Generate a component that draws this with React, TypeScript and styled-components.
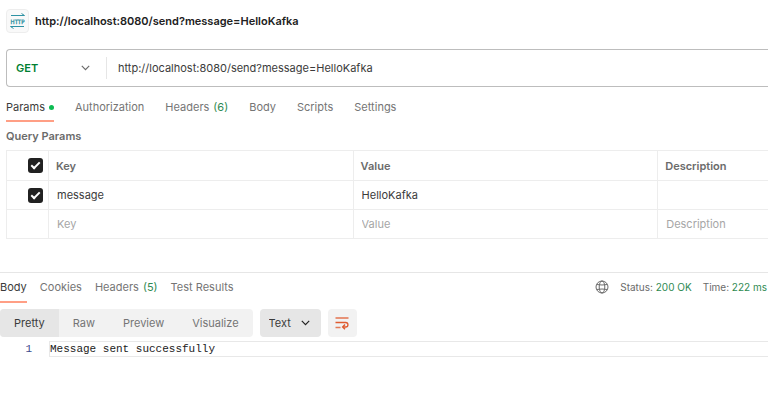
import React from "react";
import styled, { createGlobalStyle } from "styled-components";

const GlobalStyle = createGlobalStyle`
  *, *::before, *::after { box-sizing: border-box; }
  body {
    margin: 0;
    background: #fff;
    color: #6b6b6b;
    font: 12px/16px Inter, "Liberation Sans", sans-serif;
    overflow-x: hidden;
  }
  button, input, select { font: inherit; color: inherit; margin: 0; }
`;

const Page = styled.main`
  display: flex;
  flex-direction: column;
`;

const TitleBar = styled.header`
  display: flex;
  align-items: center;
  gap: 6px;
  height: 32px;
  margin: 5px 0 0 6px;
`;

const ProtocolBadge = styled.span`
  display: flex;
  width: 23px;
  height: 24px;
  align-items: center;
  justify-content: center;
  border: 1px solid #ededed;
  border-radius: 4px;
  background: #f9f9f9;
`;

const RequestTitle = styled.h1`
  margin: 0;
  font-size: 11px;
  line-height: 16px;
  font-weight: 600;
  color: #212121;
`;

const AddressBar = styled.form`
  display: flex;
  align-items: center;
  height: 38px;
  margin: 12px 0 0 6px;
  border: 1px solid #bdbdbd;
  border-right: 0;
  border-radius: 4px 0 0 4px;
`;

const SelectWrap = styled.label<{ $kind: "method" | "format" }>`
  display: grid;
  align-items: center;
  height: ${(p) => (p.$kind === "method" ? 22 : 28)}px;
  width: ${(p) => (p.$kind === "method" ? 100 : 61)}px;
  border-right: ${(p) => (p.$kind === "method" ? "1px solid #e6e6e6" : "0")};
  border-radius: ${(p) => (p.$kind === "method" ? 0 : 4)}px;
  background: ${(p) => (p.$kind === "method" ? "transparent" : "#e6e6e6")};
  color: ${(p) => (p.$kind === "method" ? "#6b6b6b" : "#212121")};
  > * { grid-area: 1 / 1; }
  > svg {
    justify-self: end;
    margin-right: ${(p) => (p.$kind === "method" ? 16 : 11)}px;
    pointer-events: none;
  }
`;

const Select = styled.select<{ $kind: "method" | "format" }>`
  appearance: none;
  width: 100%;
  height: 100%;
  border: 0;
  padding: 0 0 0 9px;
  background: transparent;
  font-size: 11px;
  font-weight: ${(p) => (p.$kind === "method" ? 600 : 400)};
  color: ${(p) => (p.$kind === "method" ? "#007f31" : "#3b3b3b")};
`;

const UrlInput = styled.input`
  flex: 1;
  min-width: 0;
  height: 100%;
  border: 0;
  padding: 0 11px;
  outline: 0;
  background: transparent;
  font-size: 11px;
  color: #3b3b3b;
`;

const TabRow = styled.nav<{ $gap: number; $inset: number }>`
  display: flex;
  gap: ${(p) => p.$gap}px;
  padding-left: ${(p) => p.$inset}px;
`;

const Tab = styled.button<{ $active?: boolean }>`
  display: flex;
  align-items: center;
  gap: 4px;
  height: 30px;
  border: 0;
  border-bottom: 2px solid ${(p) => (p.$active ? "#ff9f85" : "transparent")};
  padding: 0;
  background: none;
  font-size: 11px;
  white-space: nowrap;
  color: ${(p) => (p.$active ? "#3b3b3b" : "#757575")};
`;

const Count = styled.span`
  color: #2f8a52;
`;

const Dot = styled.i`
  width: 5px;
  height: 5px;
  border-radius: 50%;
  background: #0cbb52;
`;

const RequestTabs = styled.div`
  padding-top: 5px;
  ${Tab} { padding-top: 2px; }
`;

const SectionTitle = styled.h2`
  margin: 6px 0 5px 6px;
  font-size: 11px;
  line-height: 17px;
  font-weight: 600;
  color: #6b6b6b;
`;

const TableWrap = styled.div`
  padding-left: 6px;
`;

const ParamTable = styled.table`
  width: 100%;
  table-layout: fixed;
  border-collapse: collapse;
  font-size: 11px;
  border-left: 1px solid #ededed;
`;

const Col = styled.col<{ $w?: string }>`
  width: ${(p) => p.$w ?? "auto"};
`;

const cellBase = `
  height: 29px;
  border-top: 1px solid #ededed;
  border-bottom: 1px solid #ededed;
  text-align: left;
  & + & { border-left: 1px solid #ededed; }
`;

const HeadCell = styled.th`
  ${cellBase}
  height: 30px;
  padding: 0 7px;
  font-weight: 600;
  color: #6b6b6b;
`;

const Cell = styled.td`
  ${cellBase}
  padding: 0 8px;
`;

const CellInput = styled.input`
  display: block;
  width: 100%;
  border: 0;
  padding: 0;
  outline: 0;
  background: none;
  line-height: 16px;
  color: #3b3b3b;
  &::placeholder { color: #a6a6a6; opacity: 1; }
`;

const CheckBox = styled.input`
  appearance: none;
  display: block;
  width: 15px;
  height: 15px;
  margin-left: auto;
  border-radius: 3px;
  background: #212121;
  &::before {
    content: "";
    display: block;
    width: 5px;
    height: 9px;
    margin: 2px 0 0 5px;
    border: solid #fff;
    border-width: 0 2px 2px 0;
    transform: rotate(45deg);
  }
`;

const CheckHead = styled(HeadCell)`
  padding-right: 5px;
`;

const CheckCell = styled(Cell)`
  padding-right: 5px;
`;

const Response = styled.section`
  margin-top: 33px;
  border-top: 1px solid #e6e6e6;
`;

const ResponseHead = styled.div`
  display: flex;
  justify-content: space-between;
`;

const Meta = styled.div`
  display: flex;
  align-items: center;
  height: 28px;
  gap: 11px;
  padding-right: 1px;
  font-size: 10px;
  white-space: nowrap;
  color: #6b6b6b;
`;

const IconButton = styled.button<{ $filled?: boolean }>`
  display: flex;
  align-items: center;
  justify-content: center;
  width: ${(p) => (p.$filled ? 29 : 14)}px;
  height: ${(p) => (p.$filled ? 28 : 14)}px;
  border: 0;
  border-radius: 4px;
  padding: 0;
  background: ${(p) => (p.$filled ? "#f2f2f2" : "none")};
`;

const ViewBar = styled.div`
  display: flex;
  gap: 7px;
  padding-top: 6px;
`;

const Segments = styled.div`
  display: flex;
  border-radius: 4px;
  overflow: hidden;
  background: #f2f2f2;
`;

const Segment = styled.button<{ $active?: boolean }>`
  height: 28px;
  border: 0;
  padding: 0 14px;
  background: ${(p) => (p.$active ? "#e6e6e6" : "transparent")};
  font-size: 11px;
  color: ${(p) => (p.$active ? "#3b3b3b" : "#757575")};
`;

const CodeLine = styled.div`
  display: flex;
  margin-top: 4px;
  font: 11px/14px "Liberation Mono", monospace;
`;

const LineNumber = styled.span`
  width: 49px;
  padding-right: 17px;
  text-align: right;
  line-height: 16px;
  color: #3c4a8c;
`;

const CodeText = styled.code`
  flex: 1;
  border: 1px solid #e8e8e8;
  border-right: 0;
  font: inherit;
  color: #212121;
`;

const Chevron = () => (
  <svg width="9" height="6" viewBox="0 0 9 6" fill="none" stroke="currentColor" strokeWidth="1.2" aria-hidden="true">
    <path d="M.8.9 4.5 4.6 8.2.9" />
  </svg>
);

const HttpIcon = () => (
  <svg width="19" height="16" viewBox="0 0 19 16" fill="none" stroke="#2e92a3" strokeWidth="1" aria-label="HTTP">
    <path d="M3 2.500h13.500M13.500.5l3 2" />
    <path d="M16 13.500H2.500M5.500 15.500l-3-2" />
    <text x="9.500" y="10.500" textAnchor="middle" fontFamily="DejaVu Sans Condensed, Roboto, sans-serif" fontSize="6" fontWeight="400" fill="#2e92a3" stroke="#2e92a3" strokeWidth=".3" textRendering="geometricPrecision">HTTP</text>
  </svg>
);

const GlobeIcon = () => (
  <svg width="14" height="14" viewBox="0 0 14 14" fill="none" stroke="#6b6b6b" strokeWidth="1" aria-hidden="true">
    <circle cx="7" cy="7" r="6" />
    <ellipse cx="7" cy="7" rx="2.800" ry="6" />
    <path d="M1.700 4.500Q7 5.500 12.300 4.500M1.700 9.500Q7 8.500 12.300 9.500" />
  </svg>
);

const WrapIcon = () => (
  <svg width="14" height="14" viewBox="0 0 14 14" fill="none" stroke="#df5b30" aria-hidden="true">
    <path d="M.5 2H13.500" strokeWidth="1.800" opacity=".7" />
    <path d="M.5 6.500H10.700a2.200 2.200 0 0 1 0 4.500H8" strokeWidth="1.300" />
    <path d="M10 8.600 7.700 11l2.300 2.300" strokeWidth="1.500" />
    <path d="M.5 11.500H5.500" strokeWidth="1.500" opacity=".8" />
  </svg>
);

const rows = [
  { key: "message", value: "HelloKafka", checked: true },
  { key: "", value: "", checked: false },
];

export default function App() {
  return (
    <>
      <GlobalStyle />
      <Page>
        <TitleBar>
          <ProtocolBadge><HttpIcon /></ProtocolBadge>
          <RequestTitle>http://localhost:8080/send?message=HelloKafka</RequestTitle>
        </TitleBar>
        <AddressBar>
          <SelectWrap $kind="method">
            <Select $kind="method" aria-label="Method"><option>GET</option></Select>
            <Chevron />
          </SelectWrap>
          <UrlInput aria-label="Request URL" defaultValue="http://localhost:8080/send?message=HelloKafka" />
        </AddressBar>
        <RequestTabs>
          <TabRow $gap={21} $inset={6} aria-label="Request">
            <Tab $active>Params <Dot /></Tab>
            <Tab>Authorization</Tab>
            <Tab>Headers <Count>(6)</Count></Tab>
            <Tab>Body</Tab>
            <Tab>Scripts</Tab>
            <Tab>Settings</Tab>
          </TabRow>
        </RequestTabs>
        <SectionTitle>Query Params</SectionTitle>
        <TableWrap>
          <ParamTable>
            <colgroup>
              <Col $w="42px" />
              <Col $w="40%" />
              <Col $w="40%" />
              <Col />
            </colgroup>
            <thead>
              <tr>
                <CheckHead><CheckBox type="checkbox" aria-label="Select all" defaultChecked /></CheckHead>
                <HeadCell>Key</HeadCell>
                <HeadCell>Value</HeadCell>
                <HeadCell>Description</HeadCell>
              </tr>
            </thead>
            <tbody>
              {rows.map((row) => (
                <tr key={row.key}>
                  <CheckCell>
                    {row.checked && <CheckBox type="checkbox" aria-label={row.key} defaultChecked />}
                  </CheckCell>
                  <Cell><CellInput aria-label="Key" placeholder="Key" defaultValue={row.key} /></Cell>
                  <Cell><CellInput aria-label="Value" placeholder="Value" defaultValue={row.value} /></Cell>
                  <Cell><CellInput aria-label="Description" placeholder={row.checked ? "" : "Description"} /></Cell>
                </tr>
              ))}
            </tbody>
          </ParamTable>
        </TableWrap>
        <Response>
          <ResponseHead>
            <TabRow $gap={13} $inset={0} aria-label="Response">
              <Tab $active>Body</Tab>
              <Tab>Cookies</Tab>
              <Tab>Headers <Count>(5)</Count></Tab>
              <Tab>Test Results</Tab>
            </TabRow>
            <Meta>
              <IconButton aria-label="Network"><GlobeIcon /></IconButton>
              <span>Status: <Count>200 OK</Count></span>
              <span>Time: <Count>222 ms</Count></span>
            </Meta>
          </ResponseHead>
          <ViewBar>
            <Segments>
              <Segment $active>Pretty</Segment>
              <Segment>Raw</Segment>
              <Segment>Preview</Segment>
              <Segment>Visualize</Segment>
            </Segments>
            <SelectWrap $kind="format">
              <Select $kind="format" aria-label="Format"><option>Text</option></Select>
              <Chevron />
            </SelectWrap>
            <IconButton $filled aria-label="Wrap lines"><WrapIcon /></IconButton>
          </ViewBar>
          <CodeLine>
            <LineNumber>1</LineNumber>
            <CodeText>Message sent successfully</CodeText>
          </CodeLine>
        </Response>
      </Page>
    </>
  );
}
